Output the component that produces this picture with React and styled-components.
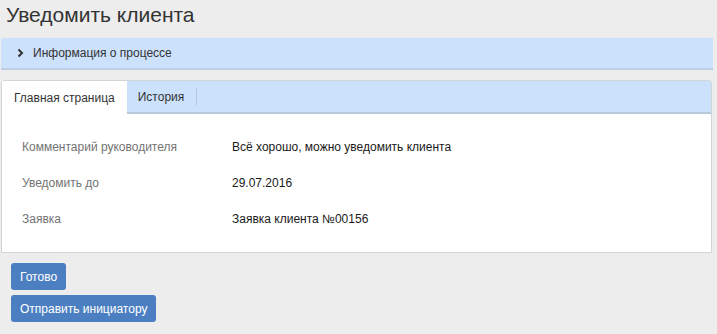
import React from "react";
import styled, { createGlobalStyle } from "styled-components";

const GlobalStyle = createGlobalStyle`
	html, body {
		margin: 0;
		padding: 0;
		background: #ededed;
		font-family: "Liberation Sans", Arial, sans-serif;
	}
`;

const Page = styled.div`
	width: 717px;
	height: 334px;
	overflow: hidden;
	padding: 0 4px 0 1px;
	box-sizing: border-box;
`;

const Title = styled.h1`
	margin: 0;
	padding: 3px 0 0 5px;
	height: 38px;
	box-sizing: border-box;
	font-size: 21px;
	font-weight: normal;
	color: #333;
`;

const InfoBar = styled.div`
	display: flex;
	align-items: center;
	gap: 9px;
	height: 30px;
	padding-left: 16px;
	background: #cce1fc;
	border-bottom: 2px solid #bdcfe4;
	font-size: 12px;
	color: #333;
`;

const Panel = styled.section`
	margin-top: 10px;
	margin-right: 1px;
	background: #fff;
	border: 1px solid #d3d3da;
	border-radius: 3px 3px 0 0;
`;

const TabBar = styled.div`
	display: flex;
	height: 31px;
	background: #cce1fc;
	border-bottom: 2px solid #b9c9dc;
`;

const Tab = styled.div`
	display: flex;
	align-items: center;
	padding: ${(p) => (p.active ? "0 12px" : "0 13px 0 11px")};
	font-size: 12px;
	color: #333;
	background: ${(p) => (p.active ? "#fff" : "transparent")};
	margin-bottom: ${(p) => (p.active ? "-2px" : "0")};
	position: relative;
	&::after {
		content: "";
		display: ${(p) => (p.divider ? "block" : "none")};
		position: absolute;
		right: 0;
		top: 7px;
		bottom: 7px;
		width: 1px;
		background: #b7c7da;
	}
`;

const Fields = styled.div`
	display: grid;
	grid-template-columns: 210px 1fr;
	padding: 15px 20px 15px;
`;

const Label = styled.div`
	height: 36px;
	display: flex;
	align-items: center;
	font-size: 12px;
	color: #737373;
`;

const Value = styled(Label)`
	color: #1a1a1a;
`;

const Actions = styled.div`
	display: flex;
	flex-direction: column;
	align-items: flex-start;
	gap: 5px;
	padding: 10px 0 0 10px;
`;

const Button = styled.button`
	height: 27px;
	padding: 0 9px;
	border: none;
	border-radius: 3px;
	background: #4c7fc2;
	color: #fff;
	font-family: "Liberation Sans", Arial, sans-serif;
	font-size: 12px;
	cursor: pointer;
`;

const Chevron = () => (
	<svg width="7" height="10" viewBox="0 0 7 10">
		<path d="M1.5 1.5 L5 5 L1.5 8.5" fill="none" stroke="#333" strokeWidth="2" />
	</svg>
);

const fields = [
	["Комментарий руководителя", "Всё хорошо, можно уведомить клиента"],
	["Уведомить до", "29.07.2016"],
	["Заявка", "Заявка клиента №00156"],
];

export default function App() {
	return (
		<Page>
			<GlobalStyle />
			<Title>Уведомить клиента</Title>
			<InfoBar>
				<Chevron />
				Информация о процессе
			</InfoBar>
			<Panel>
				<TabBar>
					<Tab active>Главная страница</Tab>
					<Tab divider>История</Tab>
				</TabBar>
				<Fields>
					{fields.map(([label, value]) => (
						<React.Fragment key={label}>
							<Label>{label}</Label>
							<Value>{value}</Value>
						</React.Fragment>
					))}
				</Fields>
			</Panel>
			<Actions>
				<Button>Готово</Button>
				<Button>Отправить инициатору</Button>
			</Actions>
		</Page>
	);
}
